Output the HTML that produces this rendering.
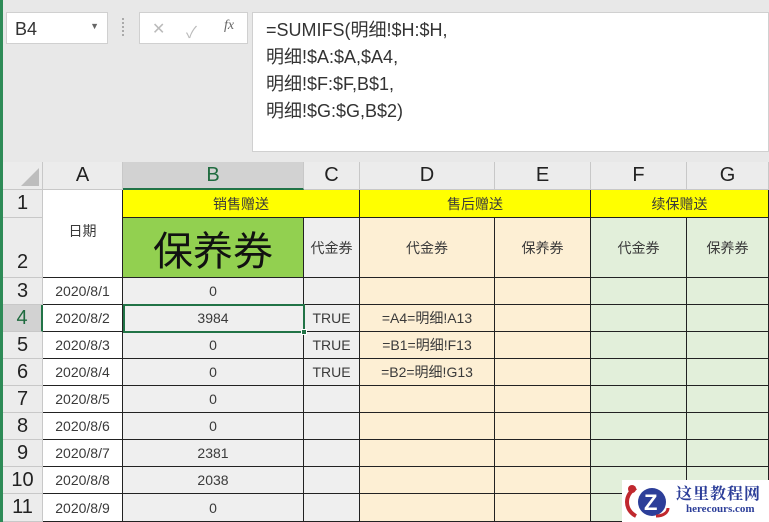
<!DOCTYPE html>
<html><head><meta charset="utf-8"><style>
body{margin:0;width:769px;height:522px;overflow:hidden;background:#e8e8e8;font-family:"Liberation Sans","Noto Sans CJK SC",sans-serif;position:relative}
.a{position:absolute;box-sizing:border-box}
.c{position:absolute;box-sizing:border-box;display:flex;align-items:center;justify-content:center;font-size:14px;color:#3a3a3a;border-right:1px solid #222;border-bottom:1px solid #222}
.h{position:absolute;box-sizing:border-box;display:flex;align-items:center;justify-content:center;background:#ececec;color:#222;font-size:20px;border-right:1px solid #c8c8c8;border-bottom:1px solid #c8c8c8}
</style></head><body>
<div class="a" style="left:3px;top:162px;width:766px;height:360px;background:#fff"></div>
<div class="a" style="left:0;top:0;width:3px;height:522px;background:#2e8b57;z-index:5"></div>
<div class="a" style="left:6px;top:12px;width:102px;height:32px;background:#fff;border:1px solid #d0d0d0;font-size:18px;padding:6px 0 0 8px;color:#333">B4<span style="position:absolute;right:8px;top:8px;font-size:9px;color:#666">▼</span></div>
<div class="a" style="left:122px;top:18px;width:2px;height:18px;border-left:2px dotted #aaa"></div>
<div class="a" style="left:139px;top:12px;width:109px;height:32px;background:#fff;border:1px solid #d0d0d0;color:#bbb;font-size:16px"><span style="position:absolute;left:12px;top:6px">✕</span><span style="position:absolute;left:46px;top:6px">✓</span><span style="position:absolute;left:84px;top:5px;color:#666;font-style:italic;font-family:'Liberation Serif',serif;font-size:14px">fx</span></div>
<div class="a" style="left:252px;top:12px;width:517px;height:140px;background:#fff;border:1px solid #d0d0d0;font-size:18px;color:#333;line-height:27px;padding:4px 0 0 13px">=SUMIFS(明细!$H:$H,<br>明细!$A:$A,$A4,<br>明细!$F:$F,B$1,<br>明细!$G:$G,B$2)</div>
<div class="h" style="left:3px;top:162px;width:40px;height:28px"><div style="position:absolute;right:3px;bottom:3px;width:0;height:0;border-left:18px solid transparent;border-bottom:18px solid #bdbdbd"></div></div>
<div class="h" style="left:43px;top:162px;width:80px;height:28px">A</div>
<div class="h" style="left:123px;top:162px;width:181px;height:28px;background:#d2d2d2;color:#1f6b3f;border-bottom:2px solid #217346">B</div>
<div class="h" style="left:304px;top:162px;width:56px;height:28px">C</div>
<div class="h" style="left:360px;top:162px;width:135px;height:28px">D</div>
<div class="h" style="left:495px;top:162px;width:96px;height:28px">E</div>
<div class="h" style="left:591px;top:162px;width:96px;height:28px">F</div>
<div class="h" style="left:687px;top:162px;width:82px;height:28px">G</div>
<div class="h" style="left:3px;top:190px;width:40px;height:28px">1</div>
<div class="h" style="left:3px;top:218px;width:40px;height:60px;align-items:flex-end;padding-bottom:3px">2</div>
<div class="h" style="left:3px;top:278px;width:40px;height:27px">3</div>
<div class="h" style="left:3px;top:305px;width:40px;height:27px;background:#d2d2d2;color:#1f6b3f;border-right:2px solid #217346">4</div>
<div class="h" style="left:3px;top:332px;width:40px;height:27px">5</div>
<div class="h" style="left:3px;top:359px;width:40px;height:27px">6</div>
<div class="h" style="left:3px;top:386px;width:40px;height:27px">7</div>
<div class="h" style="left:3px;top:413px;width:40px;height:27px">8</div>
<div class="h" style="left:3px;top:440px;width:40px;height:27px">9</div>
<div class="h" style="left:3px;top:467px;width:40px;height:27px">10</div>
<div class="h" style="left:3px;top:494px;width:40px;height:28px">11</div>
<div class="c" style="left:43px;top:190px;width:80px;height:88px;background:#fff;padding-bottom:6px">日期</div>
<div class="c" style="left:123px;top:190px;width:237px;height:28px;background:#ffff00">销售赠送</div>
<div class="c" style="left:360px;top:190px;width:231px;height:28px;background:#ffff00">售后赠送</div>
<div class="c" style="left:591px;top:190px;width:178px;height:28px;background:#ffff00">续保赠送</div>
<div class="c" style="left:123px;top:218px;width:181px;height:60px;background:#92d050;font-size:40px;color:#111">保养券</div>
<div class="c" style="left:304px;top:218px;width:56px;height:60px;background:#efefef">代金券</div>
<div class="c" style="left:360px;top:218px;width:135px;height:60px;background:#fdefd4">代金券</div>
<div class="c" style="left:495px;top:218px;width:96px;height:60px;background:#fdefd4">保养券</div>
<div class="c" style="left:591px;top:218px;width:96px;height:60px;background:#e2efda">代金券</div>
<div class="c" style="left:687px;top:218px;width:82px;height:60px;background:#e2efda">保养券</div>
<div id="rows"></div>
<script>
var d=[["2020/8/1","0","",""],["2020/8/2","3984","TRUE","=A4=明细!A13"],["2020/8/3","0","TRUE","=B1=明细!F13"],["2020/8/4","0","TRUE","=B2=明细!G13"],["2020/8/5","0","",""],["2020/8/6","0","",""],["2020/8/7","2381","",""],["2020/8/8","2038","",""],["2020/8/9","0","",""]];
var h="";d.forEach(function(r,i){var y=278+i*27,hh=i==8?28:27;
h+='<div class="c" style="left:43px;top:'+y+'px;width:80px;height:'+hh+'px;background:#fff">'+r[0]+'</div>';
h+='<div class="c" style="left:123px;top:'+y+'px;width:181px;height:'+hh+'px;background:#efefef">'+r[1]+'</div>';
h+='<div class="c" style="left:304px;top:'+y+'px;width:56px;height:'+hh+'px;background:#efefef">'+r[2]+'</div>';
h+='<div class="c" style="left:360px;top:'+y+'px;width:135px;height:'+hh+'px;background:#fdefd4">'+r[3]+'</div>';
h+='<div class="c" style="left:495px;top:'+y+'px;width:96px;height:'+hh+'px;background:#fdefd4"></div>';
h+='<div class="c" style="left:591px;top:'+y+'px;width:96px;height:'+hh+'px;background:#e2efda"></div>';
h+='<div class="c" style="left:687px;top:'+y+'px;width:82px;height:'+hh+'px;background:#e2efda"></div>';});
document.getElementById("rows").innerHTML=h;
</script>
<div class="a" style="left:123px;top:304px;width:182px;height:29px;border:2px solid #217346"></div>
<div class="a" style="left:301px;top:329px;width:6px;height:6px;background:#217346;border:1px solid #fff"></div>
<div class="a" style="left:622px;top:480px;width:147px;height:42px;background:#fff"></div>
<svg class="a" style="left:622px;top:480px" width="48" height="42"><path d="M14 8 C2 14 2 30 14 36" stroke="#c0282e" stroke-width="4" fill="none"/><circle cx="10" cy="9" r="4" fill="#c0282e"/><circle cx="30" cy="22" r="14" fill="#2c3e99"/><text x="22" y="30" font-size="22" font-weight="bold" fill="#fff" font-family="Liberation Sans">Z</text><path d="M34 36 C42 36 46 32 46 28" stroke="#c0282e" stroke-width="3" fill="none"/></svg>
<div class="a" style="left:676px;top:481px;font-size:16px;font-weight:bold;color:#2c3e99;font-family:'Liberation Serif','Noto Serif CJK SC',serif;letter-spacing:1px">这里教程网</div>
<div class="a" style="left:686px;top:503px;font-size:11px;font-weight:bold;color:#2c3e99;font-family:'Liberation Serif',serif">herecours.com</div>
</body></html>
